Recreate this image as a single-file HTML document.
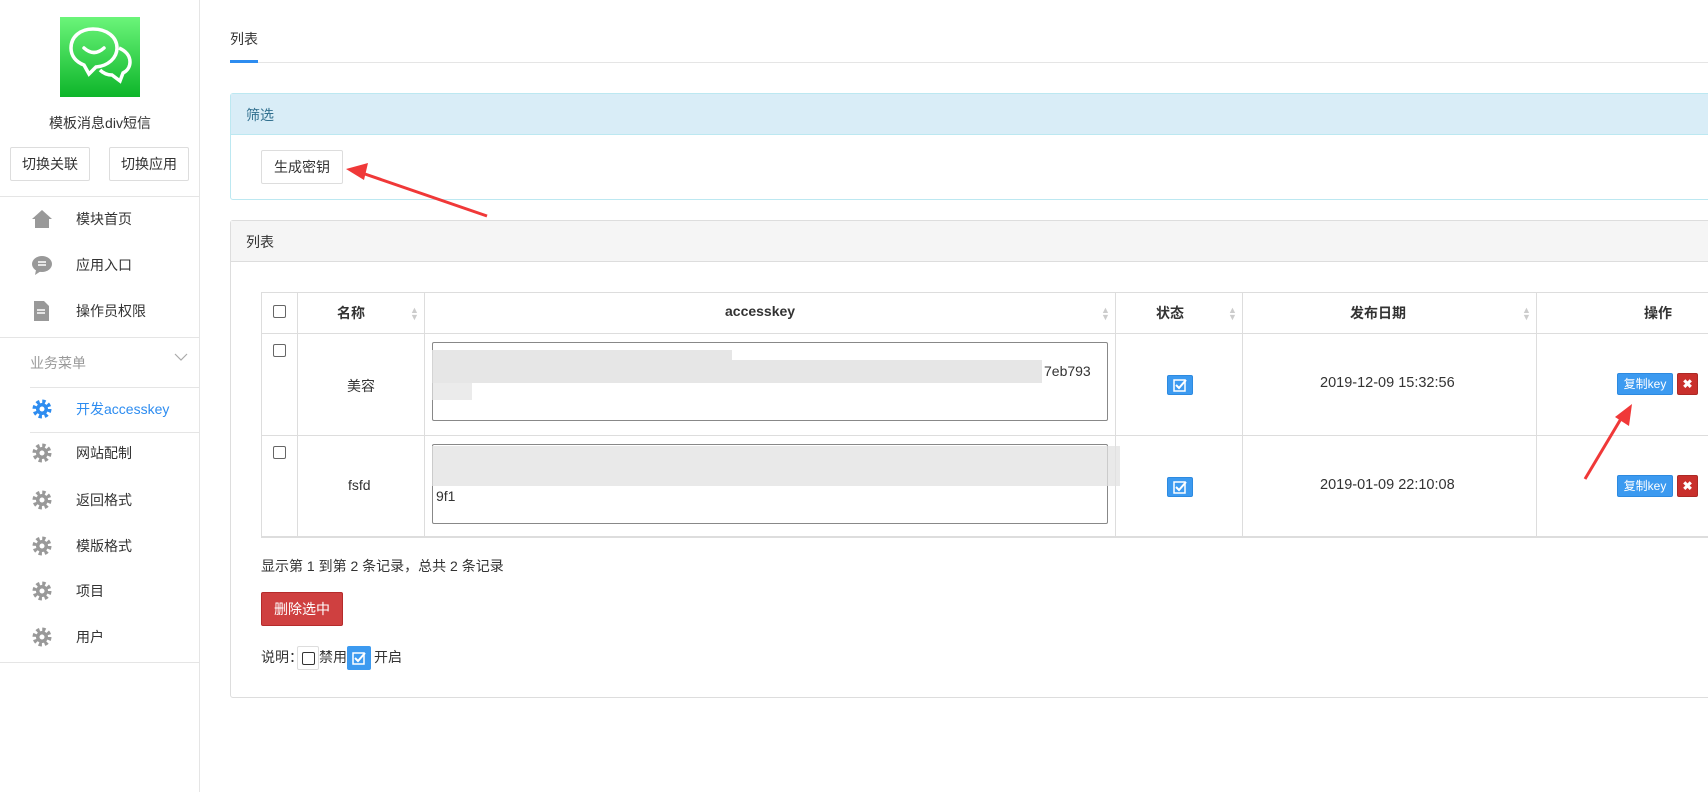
<!DOCTYPE html>
<html><head><meta charset="utf-8"><style>
*{margin:0;padding:0;box-sizing:border-box}
body{width:1708px;height:792px;overflow:hidden;background:#fff;font-family:"Liberation Sans","Noto Sans CJK SC",sans-serif;font-size:14px;color:#333;position:relative}
.a{position:absolute}
.side{left:0;top:0;width:200px;height:792px;border-right:1px solid #e5e5e5}
.btn{border:1px solid #ddd;background:#fff;text-align:center;font-size:14px;border-radius:2px}
.mi{left:76px;font-size:14px;color:#333}
.ic{left:32px;width:20px;height:20px}
.hl{height:1px;background:#e5e5e5}
.vl{width:1px;background:#ddd}
.cb{width:13px;height:13px;border:1px solid #666;border-radius:2px;background:#fff}
.blur{background:#e2e2e2}
.cbtn{background:#3c9af0;color:#fff;font-size:12px;text-align:center;border:1px solid #2d8ae0;border-radius:2px}
.xbtn{background:#c9302c;color:#fff;font-size:12px;font-weight:bold;text-align:center;border:1px solid #ac2925;border-radius:2px}
</style></head><body>
<div class="a side"></div>
<div class="a" style="left:60px;top:17px;width:80px;height:80px;background:linear-gradient(#6bf57a,#0db52a)">
<svg width="80" height="80"><path d="M33 12c-13 0-22 8-22 19 0 8 5 14 13 17l5 9 7-7c12-1 21-9 21-19 0-11-10-19-24-19z" fill="none" stroke="#fff" stroke-width="3.5"/><path d="M24 31q10 9 20 0" fill="none" stroke="#fff" stroke-width="3.5" stroke-linecap="round"/><path d="M59 31c7 3 11 8 11 14 0 5-3 9-7 11l-3 8-8-6c-5 0-9-2-12-5" fill="none" stroke="#fff" stroke-width="3.5"/></svg></div>
<div class="a" style="left:0;width:200px;top:113px;text-align:center;font-size:14px">模板消息div短信</div>
<div class="a btn" style="left:10px;top:147px;width:80px;height:34px;line-height:32px">切换关联</div>
<div class="a btn" style="left:109px;top:147px;width:80px;height:34px;line-height:32px">切换应用</div>
<div class="a hl" style="left:0;top:196px;width:200px"></div>
<svg class="a ic" style="top:209px" viewBox="0 0 20 20"><path d="M10 1L0 10h3v9h14v-9h3z" fill="#999"/></svg>
<div class="a mi" style="top:209px">模块首页</div>
<svg class="a ic" style="top:255px" viewBox="0 0 20 20"><ellipse cx="10" cy="9" rx="10" ry="8" fill="#999"/><path d="M4 15l-1 5 6-4z" fill="#999"/><path d="M6 7h8M6 10h8" stroke="#fff" stroke-width="1.5"/></svg>
<div class="a mi" style="top:255px">应用入口</div>
<svg class="a ic" style="top:301px" viewBox="0 0 20 20"><path d="M2 0h10l5 5v15H2z" fill="#999"/><path d="M5 9h8M5 12h8" stroke="#fff" stroke-width="1.5"/></svg>
<div class="a mi" style="top:301px">操作员权限</div>
<div class="a hl" style="left:0;top:337px;width:200px"></div>
<div class="a" style="left:30px;top:353px;font-size:14px;color:#999">业务菜单</div>
<svg class="a" style="left:174px;top:352px" width="14" height="10"><path d="M1 2l6 6 6-6" fill="none" stroke="#aaa" stroke-width="1.2"/></svg>
<div class="a hl" style="left:30px;top:387px;width:170px"></div>
<svg class="a ic" style="top:399px" viewBox="0 0 20 20"><circle cx="10" cy="10" r="7" fill="none" stroke="#2d8cf0" stroke-width="5" stroke-dasharray="3 2.5"/><circle cx="10" cy="10" r="6" fill="#2d8cf0"/><circle cx="10" cy="10" r="2.5" fill="#fff"/></svg>
<div class="a mi" style="top:399px;color:#2d8cf0">开发accesskey</div>
<div class="a hl" style="left:30px;top:432px;width:170px"></div>
<svg class="a ic" style="top:443px" viewBox="0 0 20 20"><circle cx="10" cy="10" r="7" fill="none" stroke="#999" stroke-width="5" stroke-dasharray="3 2.5"/><circle cx="10" cy="10" r="6" fill="#999"/><circle cx="10" cy="10" r="2.5" fill="#fff"/></svg>
<div class="a mi" style="top:443px">网站配制</div>
<svg class="a ic" style="top:490px" viewBox="0 0 20 20"><circle cx="10" cy="10" r="7" fill="none" stroke="#999" stroke-width="5" stroke-dasharray="3 2.5"/><circle cx="10" cy="10" r="6" fill="#999"/><circle cx="10" cy="10" r="2.5" fill="#fff"/></svg>
<div class="a mi" style="top:490px">返回格式</div>
<svg class="a ic" style="top:536px" viewBox="0 0 20 20"><circle cx="10" cy="10" r="7" fill="none" stroke="#999" stroke-width="5" stroke-dasharray="3 2.5"/><circle cx="10" cy="10" r="6" fill="#999"/><circle cx="10" cy="10" r="2.5" fill="#fff"/></svg>
<div class="a mi" style="top:536px">模版格式</div>
<svg class="a ic" style="top:581px" viewBox="0 0 20 20"><circle cx="10" cy="10" r="7" fill="none" stroke="#999" stroke-width="5" stroke-dasharray="3 2.5"/><circle cx="10" cy="10" r="6" fill="#999"/><circle cx="10" cy="10" r="2.5" fill="#fff"/></svg>
<div class="a mi" style="top:581px">项目</div>
<svg class="a ic" style="top:627px" viewBox="0 0 20 20"><circle cx="10" cy="10" r="7" fill="none" stroke="#999" stroke-width="5" stroke-dasharray="3 2.5"/><circle cx="10" cy="10" r="6" fill="#999"/><circle cx="10" cy="10" r="2.5" fill="#fff"/></svg>
<div class="a mi" style="top:627px">用户</div>
<div class="a hl" style="left:0;top:662px;width:200px"></div>

<div class="a" style="left:230px;top:29px">列表</div>
<div class="a hl" style="left:230px;top:62px;width:1478px"></div>
<div class="a" style="left:230px;top:60px;width:28px;height:3px;background:#2d8cf0"></div>

<div class="a" style="left:230px;top:93px;width:1490px;height:107px;border:1px solid #bce8f1;border-radius:3px"></div>
<div class="a" style="left:231px;top:94px;width:1480px;height:41px;background:#d9edf7;border-bottom:1px solid #bce8f1"></div>
<div class="a" style="left:246px;top:105px;color:#31708f">筛选</div>
<div class="a btn" style="left:261px;top:150px;width:82px;height:34px;line-height:32px">生成密钥</div>

<div class="a" style="left:230px;top:220px;width:1490px;height:478px;border:1px solid #ddd;border-radius:3px"></div>
<div class="a" style="left:231px;top:221px;width:1480px;height:41px;background:#f5f5f5;border-bottom:1px solid #ddd"></div>
<div class="a" style="left:246px;top:232px">列表</div>

<div class="a" style="left:261px;top:292px;width:1460px;height:246px;border:1px solid #ddd;border-bottom:2px solid #ddd"></div>
<div class="a hl" style="left:261px;top:333px;width:1447px;background:#ddd"></div>
<div class="a hl" style="left:261px;top:435px;width:1447px;background:#ddd"></div>
<div class="a vl" style="left:297px;top:292px;height:245px"></div>
<div class="a vl" style="left:424px;top:292px;height:245px"></div>
<div class="a vl" style="left:1115px;top:292px;height:245px"></div>
<div class="a vl" style="left:1242px;top:292px;height:245px"></div>
<div class="a vl" style="left:1536px;top:292px;height:245px"></div>
<div class="a cb" style="left:273px;top:305px"></div>
<div class="a cb" style="left:273px;top:344px"></div>
<div class="a cb" style="left:273px;top:446px"></div>
<div class="a" style="left:337px;top:303px;font-weight:bold">名称</div>
<div class="a" style="left:725px;top:303px;font-weight:bold">accesskey</div>
<div class="a" style="left:1156px;top:303px;font-weight:bold">状态</div>
<div class="a" style="left:1350px;top:303px;font-weight:bold">发布日期</div>
<div class="a" style="left:1644px;top:303px;font-weight:bold">操作</div>
<div class="a" style="left:410px;top:307px;color:#ccc;font-size:9px;line-height:7px">▲<br>▼</div>
<div class="a" style="left:1101px;top:307px;color:#ccc;font-size:9px;line-height:7px">▲<br>▼</div>
<div class="a" style="left:1228px;top:307px;color:#ccc;font-size:9px;line-height:7px">▲<br>▼</div>
<div class="a" style="left:1522px;top:307px;color:#ccc;font-size:9px;line-height:7px">▲<br>▼</div>

<div class="a" style="left:347px;top:376px">美容</div>
<div class="a" style="left:348px;top:477px">fsfd</div>
<div class="a" style="left:432px;top:342px;width:676px;height:79px;border:1px solid #888;border-radius:2px"></div>
<div class="a blur" style="left:432px;top:350px;width:300px;height:33px;opacity:.85"></div>
<div class="a blur" style="left:732px;top:360px;width:310px;height:23px;opacity:.85"></div>
<div class="a blur" style="left:432px;top:383px;width:40px;height:17px;opacity:.7"></div>
<div class="a" style="left:1044px;top:363px;font-size:14px">7eb793</div>
<div class="a" style="left:432px;top:444px;width:676px;height:80px;border:1px solid #888;border-radius:2px"></div>
<div class="a blur" style="left:432px;top:446px;width:688px;height:40px;opacity:.75"></div>
<div class="a" style="left:436px;top:488px;font-size:14px">9f1</div>

<div class="a cbtn" style="left:1167px;top:375px;width:26px;height:20px"></div>
<div class="a cbtn" style="left:1167px;top:477px;width:26px;height:20px"></div>
<svg class="a" style="left:1173px;top:378px" width="14" height="14"><rect x="1" y="2" width="11" height="11" fill="none" stroke="#fff" stroke-width="1.5"/><path d="M3 7l3 3 7-8" fill="none" stroke="#fff" stroke-width="2"/></svg>
<svg class="a" style="left:1173px;top:480px" width="14" height="14"><rect x="1" y="2" width="11" height="11" fill="none" stroke="#fff" stroke-width="1.5"/><path d="M3 7l3 3 7-8" fill="none" stroke="#fff" stroke-width="2"/></svg>
<div class="a" style="left:1320px;top:375px;font-size:14.5px">2019-12-09 15:32:56</div>
<div class="a" style="left:1320px;top:477px;font-size:14.5px">2019-01-09 22:10:08</div>
<div class="a cbtn" style="left:1617px;top:373px;width:56px;height:22px;line-height:20px">复制key</div>
<div class="a xbtn" style="left:1677px;top:373px;width:21px;height:22px;line-height:20px">✖</div>
<div class="a cbtn" style="left:1617px;top:475px;width:56px;height:22px;line-height:20px">复制key</div>
<div class="a xbtn" style="left:1677px;top:475px;width:21px;height:22px;line-height:20px">✖</div>

<div class="a" style="left:261px;top:556px">显示第 1 到第 2 条记录，总共 2 条记录</div>
<div class="a" style="left:261px;top:592px;width:82px;height:34px;background:#cf4040;border:1px solid #b52b2b;border-radius:2px;color:#fff;text-align:center;line-height:32px">删除选中</div>
<div class="a" style="left:261px;top:647px">说明：</div>
<div class="a" style="left:297px;top:646px;width:22px;height:24px;border:1px solid #ddd;border-radius:2px"></div>
<div class="a cb" style="left:302px;top:652px;border-color:#333"></div>
<div class="a" style="left:319px;top:647px">禁用</div>
<div class="a" style="left:347px;top:646px;width:24px;height:24px;background:#3c9af0;border-radius:2px"></div>
<svg class="a" style="left:351px;top:650px" width="16" height="16"><rect x="2" y="3" width="11" height="11" fill="none" stroke="#fff" stroke-width="1.5"/><path d="M4 8l3 3 7-8" fill="none" stroke="#fff" stroke-width="2"/></svg>
<div class="a" style="left:374px;top:647px">开启</div>

<svg class="a" style="left:0;top:0" width="1708" height="792"><path d="M487 216L362 173" stroke="#f03838" stroke-width="3"/><path d="M346 169l22-6-4 17z" fill="#f03838"/><path d="M1585 479L1622 417" stroke="#f03838" stroke-width="3"/><path d="M1632 404l-3 22-14-9z" fill="#f03838"/></svg>
</body></html>
